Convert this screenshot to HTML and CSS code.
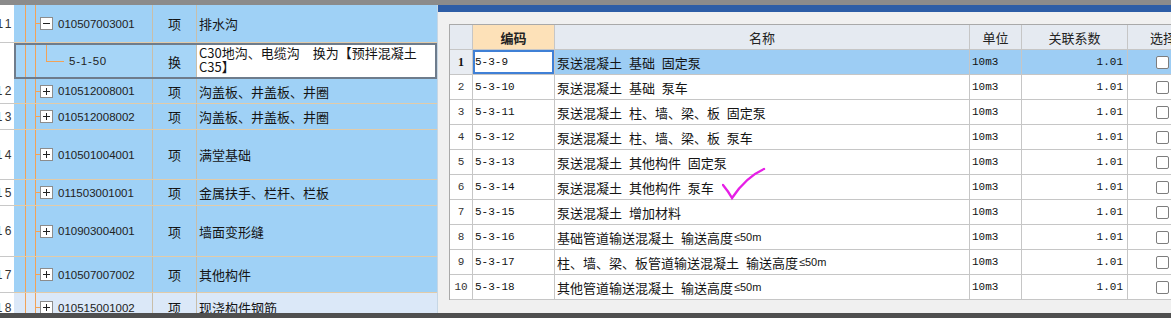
FILE: index.html
```html
<!DOCTYPE html>
<html lang="zh-CN">
<head>
  <meta charset="UTF-8">
  <meta name="viewport" content="width=device-width, initial-scale=1.0">
  <title>清单定额</title>
  <link rel="stylesheet" href="styles.css">
</head>
<body>
  <div class="screen">
    <div class="top-strip"></div>

    <div class="main">
      <!-- background grid: bill items -->
      <div class="tree-grid">
        <div class="tg-row h38">
          <div class="tg-num">11</div>
          <div class="tg-tree">
            <span class="tick"></span>
            <svg class="toggle" width="13" height="13" viewBox="0 0 13 13"><rect x="0.5" y="0.5" width="12" height="12" fill="#fff" stroke="#8c8c8c"/><path d="M3 6.5h7" stroke="#222"/></svg>
            <span class="code">010507003001</span>
          </div>
          <div class="tg-unit">项</div>
          <div class="tg-name">排水沟</div>
        </div>

        <div class="tg-row h36 sel-row">
          <div class="tg-num"></div>
          <div class="sel">
            <div class="tg-tree shifted">
              <span class="branch"></span>
              <span class="code sub">5-1-50</span>
            </div>
            <div class="tg-unit">换</div>
            <div class="tg-name edit">C30地沟、电缆沟　换为【预拌混凝土<br>C35】</div>
          </div>
        </div>

        <div class="tg-row h25">
          <div class="tg-num">12</div>
          <div class="tg-tree">
            <span class="tick"></span>
            <svg class="toggle" width="13" height="13" viewBox="0 0 13 13"><rect x="0.5" y="0.5" width="12" height="12" fill="#fff" stroke="#8c8c8c"/><path d="M3 6.5h7M6.5 3v7" stroke="#222"/></svg>
            <span class="code">010512008001</span>
          </div>
          <div class="tg-unit">项</div>
          <div class="tg-name">沟盖板、井盖板、井圈</div>
        </div>

        <div class="tg-row h26">
          <div class="tg-num">13</div>
          <div class="tg-tree">
            <span class="tick"></span>
            <svg class="toggle" width="13" height="13" viewBox="0 0 13 13"><rect x="0.5" y="0.5" width="12" height="12" fill="#fff" stroke="#8c8c8c"/><path d="M3 6.5h7M6.5 3v7" stroke="#222"/></svg>
            <span class="code">010512008002</span>
          </div>
          <div class="tg-unit">项</div>
          <div class="tg-name">沟盖板、井盖板、井圈</div>
        </div>

        <div class="tg-row h50">
          <div class="tg-num">14</div>
          <div class="tg-tree">
            <span class="tick"></span>
            <svg class="toggle" width="13" height="13" viewBox="0 0 13 13"><rect x="0.5" y="0.5" width="12" height="12" fill="#fff" stroke="#8c8c8c"/><path d="M3 6.5h7M6.5 3v7" stroke="#222"/></svg>
            <span class="code">010501004001</span>
          </div>
          <div class="tg-unit">项</div>
          <div class="tg-name">满堂基础</div>
        </div>

        <div class="tg-row h26">
          <div class="tg-num">15</div>
          <div class="tg-tree">
            <span class="tick"></span>
            <svg class="toggle" width="13" height="13" viewBox="0 0 13 13"><rect x="0.5" y="0.5" width="12" height="12" fill="#fff" stroke="#8c8c8c"/><path d="M3 6.5h7M6.5 3v7" stroke="#222"/></svg>
            <span class="code">011503001001</span>
          </div>
          <div class="tg-unit">项</div>
          <div class="tg-name">金属扶手、栏杆、栏板</div>
        </div>

        <div class="tg-row h51">
          <div class="tg-num">16</div>
          <div class="tg-tree">
            <span class="tick"></span>
            <svg class="toggle" width="13" height="13" viewBox="0 0 13 13"><rect x="0.5" y="0.5" width="12" height="12" fill="#fff" stroke="#8c8c8c"/><path d="M3 6.5h7M6.5 3v7" stroke="#222"/></svg>
            <span class="code">010903004001</span>
          </div>
          <div class="tg-unit">项</div>
          <div class="tg-name">墙面变形缝</div>
        </div>

        <div class="tg-row h36">
          <div class="tg-num">17</div>
          <div class="tg-tree">
            <span class="tick"></span>
            <svg class="toggle" width="13" height="13" viewBox="0 0 13 13"><rect x="0.5" y="0.5" width="12" height="12" fill="#fff" stroke="#8c8c8c"/><path d="M3 6.5h7M6.5 3v7" stroke="#222"/></svg>
            <span class="code">010507007002</span>
          </div>
          <div class="tg-unit">项</div>
          <div class="tg-name">其他构件</div>
        </div>

        <div class="tg-row h30 dim">
          <div class="tg-num">18</div>
          <div class="tg-tree">
            <span class="tick"></span>
            <svg class="toggle" width="13" height="13" viewBox="0 0 13 13"><rect x="0.5" y="0.5" width="12" height="12" fill="#fff" stroke="#8c8c8c"/><path d="M3 6.5h7M6.5 3v7" stroke="#222"/></svg>
            <span class="code">010515001002</span>
          </div>
          <div class="tg-unit">项</div>
          <div class="tg-name">现浇构件钢筋</div>
        </div>
      </div>

      <!-- dialog: related quota items -->
      <div class="dialog">
        <div class="dialog-bar"></div>
        <div class="dialog-body">
          <div class="pick">
            <div class="hd"></div>
            <div class="hd hd-key">编码</div>
            <div class="hd">名称</div>
            <div class="hd">单位</div>
            <div class="hd">关联系数</div>
            <div class="hd hd-left">选择</div>

            <div class="no first">1</div>
            <div class="cd focus">5-3-9</div>
            <div class="nm hl">泵送混凝土 基础 固定泵</div>
            <div class="un hl">10m3</div>
            <div class="cf hl">1.01</div>
            <div class="ck hl"><span class="box"></span></div>

            <div class="no">2</div>
            <div class="cd">5-3-10</div>
            <div class="nm">泵送混凝土 基础 泵车</div>
            <div class="un">10m3</div>
            <div class="cf">1.01</div>
            <div class="ck"><span class="box"></span></div>

            <div class="no">3</div>
            <div class="cd">5-3-11</div>
            <div class="nm">泵送混凝土 柱、墙、梁、板 固定泵</div>
            <div class="un">10m3</div>
            <div class="cf">1.01</div>
            <div class="ck"><span class="box"></span></div>

            <div class="no">4</div>
            <div class="cd">5-3-12</div>
            <div class="nm">泵送混凝土 柱、墙、梁、板 泵车</div>
            <div class="un">10m3</div>
            <div class="cf">1.01</div>
            <div class="ck"><span class="box"></span></div>

            <div class="no">5</div>
            <div class="cd">5-3-13</div>
            <div class="nm">泵送混凝土 其他构件 固定泵</div>
            <div class="un">10m3</div>
            <div class="cf">1.01</div>
            <div class="ck"><span class="box"></span></div>

            <div class="no">6</div>
            <div class="cd">5-3-14</div>
            <div class="nm">泵送混凝土 其他构件 泵车</div>
            <div class="un">10m3</div>
            <div class="cf">1.01</div>
            <div class="ck"><span class="box"></span></div>

            <div class="no">7</div>
            <div class="cd">5-3-15</div>
            <div class="nm">泵送混凝土 增加材料</div>
            <div class="un">10m3</div>
            <div class="cf">1.01</div>
            <div class="ck"><span class="box"></span></div>

            <div class="no">8</div>
            <div class="cd">5-3-16</div>
            <div class="nm">基础管道输送混凝土 输送高度<span class="le">≤50m</span></div>
            <div class="un">10m3</div>
            <div class="cf">1.01</div>
            <div class="ck"><span class="box"></span></div>

            <div class="no">9</div>
            <div class="cd">5-3-17</div>
            <div class="nm">柱、墙、梁、板管道输送混凝土 输送高度<span class="le">≤50m</span></div>
            <div class="un">10m3</div>
            <div class="cf">1.01</div>
            <div class="ck"><span class="box"></span></div>

            <div class="no">10</div>
            <div class="cd">5-3-18</div>
            <div class="nm">其他管道输送混凝土 输送高度<span class="le">≤50m</span></div>
            <div class="un">10m3</div>
            <div class="cf">1.01</div>
            <div class="ck"><span class="box"></span></div>
          </div>

          <!-- hand-drawn tick over row 6 -->
          <svg class="mark" width="44" height="34" viewBox="0 0 44 34"><path d="M1 18 Q6 24 10 31 Q24 10 42 2" fill="none" stroke="#e61fe6" stroke-width="2.4" stroke-linecap="round"/></svg>
        </div>
      </div>
    </div>

    <div class="bottom-strip"></div>
  </div>
</body>
</html>
```

FILE: styles.css
```css
body {
  margin: 0;
  width: 1171px;
  height: 318px;
  overflow: hidden;
  background: #f0f0f0;
  font-family: "Noto Sans CJK SC", sans-serif;
  font-size: 13px;
  color: #141414;
}
.screen {
  display: flex;
  flex-direction: column;
  height: 318px;
}
.top-strip {
  flex: none;
  height: 5px;
  background: #8b8b8b;
}
.bottom-strip {
  flex: none;
  height: 5px;
  background: #4f4f4f;
}
.main {
  flex: 1;
  display: flex;
  min-height: 0;
}

/* left grid */
.tree-grid {
  flex: none;
  width: 438px;
  overflow: hidden;
  background: #9fd1f6;
  border-right: 1px solid #c6d6e4;
  box-sizing: border-box;
}
.tg-row {
  display: grid;
  grid-template-columns: 14px 138px 45px 1fr;
  box-sizing: border-box;
  border-bottom: 1px solid #e2cba9;
}
.h25 { height: 25px; }
.h26 { height: 26px; }
.h30 { height: 30px; }
.h36 { height: 36px; }
.h38 { height: 38px; }
.h50 { height: 50px; }
.h51 { height: 51px; }
.tg-row.dim {
  background: #dbe8f8;
}
.tg-num {
  display: flex;
  align-items: center;
  justify-content: flex-end;
  overflow: hidden;
  background: #fff;
  border-bottom: 1px solid #c8c8c8;
  margin-bottom: -1px;
  font: 12px "Liberation Sans", sans-serif;
  letter-spacing: 2.5px;
  color: #333;
}
.tg-tree {
  display: flex;
  align-items: center;
  padding-left: 21px;
  background-image: linear-gradient(#f2a257, #f2a257), linear-gradient(#f2a257, #f2a257);
  background-size: 1px 100%;
  background-position: 11px 0, 21px 0;
  background-repeat: no-repeat;
}
.tick {
  width: 5px;
  height: 1px;
  background: #f2a257;
  flex: none;
}
.toggle {
  flex: none;
  display: block;
}
.code {
  margin-left: 5px;
  font: 11.5px "Liberation Sans", sans-serif;
  color: #222;
}
.tg-unit {
  display: flex;
  align-items: center;
  justify-content: center;
  box-sizing: border-box;
  border-left: 1px solid #c9bea9;
  border-right: 1px solid #c9bea9;
}
.tg-name {
  display: flex;
  align-items: center;
  padding-left: 2px;
  white-space: nowrap;
}

/* selected row */
.sel-row {
  border-bottom: none;
}
.sel {
  grid-column: 2 / 5;
  display: grid;
  grid-template-columns: 136px 45px 1fr;
  border: 2px solid #6e7c8c;
  background: #a6d5f7;
}
.tg-tree.shifted {
  padding-left: 30px;
  align-items: flex-start;
  background-position: 9px 0, 19px 0;
}
.branch {
  flex: none;
  width: 17px;
  height: 16px;
  border-left: 1px solid #f2a257;
  border-bottom: 1px solid #f2a257;
}
.code.sub {
  align-self: center;
  letter-spacing: 0.8px;
}
.tg-name.edit {
  display: block;
  background: #fff;
  padding: 1px 2px 0;
  line-height: 14px;
  white-space: normal;
}

/* dialog */
.dialog {
  flex: 1;
  min-width: 0;
  display: flex;
  flex-direction: column;
  overflow: hidden;
  background: #f0f0f0;
}
.dialog-bar {
  flex: none;
  height: 7px;
  background: #2d5da6;
}
.dialog-body {
  flex: 1;
  position: relative;
  padding: 12px 0 0 11px;
}
.pick {
  display: grid;
  grid-template-columns: 23px 82px 415px 52px 106px 60px;
  width: max-content;
  border-left: 1px solid #a9a9a9;
  border-top: 1px solid #a9a9a9;
  background: #fff;
}
.pick > div {
  box-sizing: border-box;
  height: 25px;
  display: flex;
  align-items: center;
  padding: 0 2px;
  white-space: nowrap;
  border-right: 1px solid #c6c6c6;
  border-bottom: 1px solid #c6c6c6;
}
.pick > .hd {
  justify-content: center;
  background: #e5eaf1;
  color: #222;
}
.pick > .hd-key {
  background: #fde1b8;
  font-weight: bold;
}
.pick > .hd-left {
  justify-content: flex-start;
  padding-left: 22px;
}
.pick > .no {
  justify-content: center;
  font: 11px "Liberation Mono", monospace;
  color: #333;
}
.pick > .no.first {
  background: #e9edf3;
  font: bold 12px "Liberation Serif", serif;
  color: #111;
}
.pick > .cd,
.pick > .un,
.pick > .cf {
  font: 11px "Liberation Mono", monospace;
  color: #111;
}
.pick > .cf {
  justify-content: flex-end;
  padding-right: 4px;
}
.pick > .nm {
  word-spacing: 4px;
}
.le {
  word-spacing: 0;
  font: 11px "Liberation Sans", sans-serif;
  margin-left: 1px;
}
.pick > .hl {
  background: #9dcdf4;
}
.pick > .focus {
  background: #fff;
  box-shadow: inset 0 0 0 2px #3f80d6;
}
.pick > .ck {
  padding-left: 28px;
}
.box {
  width: 13px;
  height: 13px;
  box-sizing: border-box;
  border: 1px solid #7d7d7d;
  border-radius: 2px;
  background: #fff;
}
.mark {
  position: absolute;
  left: 284px;
  top: 155px;
}
```
